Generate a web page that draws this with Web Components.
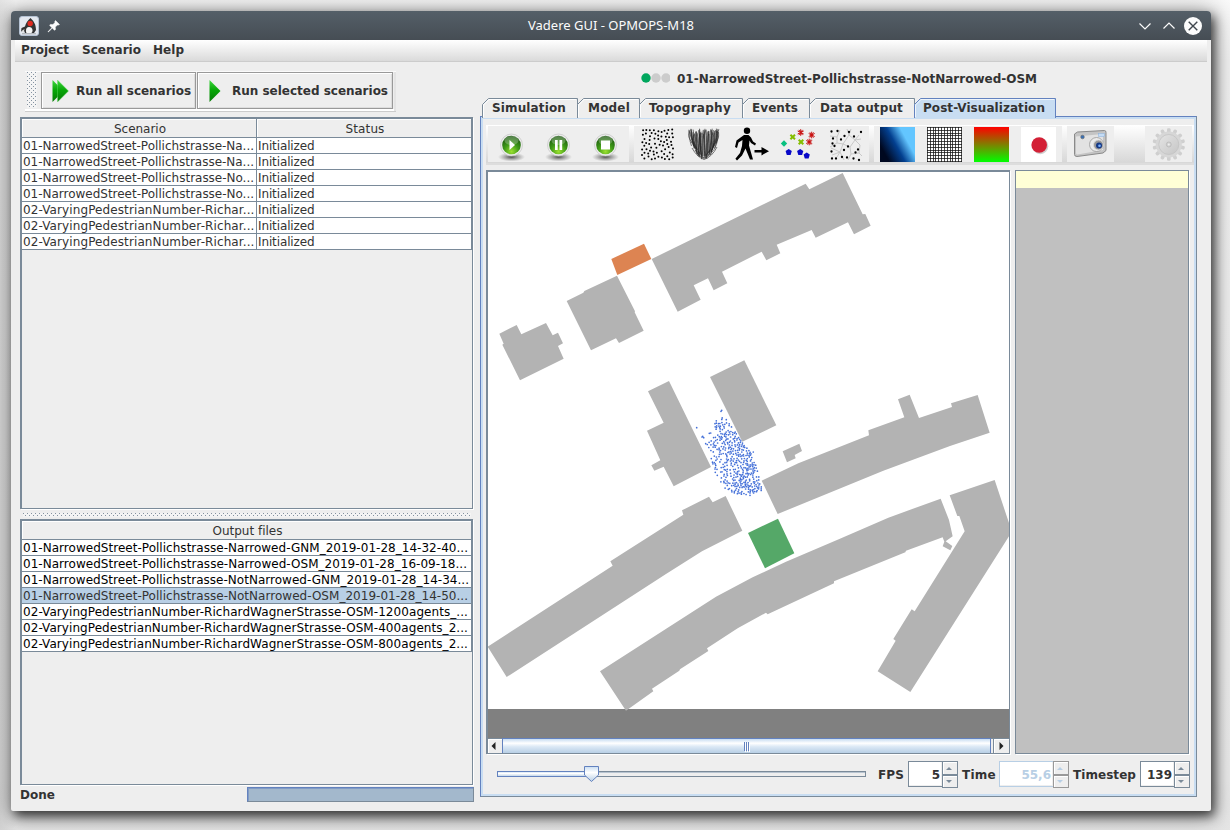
<!DOCTYPE html>
<html lang="en">
<head>
<meta charset="utf-8">
<title>Vadere GUI - OPMOPS-M18</title>
<style>
html,body{height:100%}
body{margin:0;padding:11px 19px 19px 11px;box-sizing:border-box;overflow:hidden;background:linear-gradient(90deg,rgba(0,0,0,.08),transparent 16px),linear-gradient(#fbfbfb,#f2f2f2 60px,#ececec 780px,#e6e6e6);font:12px "DejaVu Sans",sans-serif;color:#333}
[slot=title]{font:13px "Noto Sans",sans-serif}
</style>
</head>
<body>
<vd-window>
  <vd-fit slot="title" w="166">Vadere GUI - OPMOPS-M18</vd-fit>
  <vd-menubar slot="menu"></vd-menubar>
  <vd-scenarios></vd-scenarios>
  <vd-editor></vd-editor>
</vd-window>
<script>
const define = (name, css, html, init) => {
  const t = document.createElement('template');
  t.innerHTML = `<style>*{box-sizing:border-box}${css}</style>${html}`;
  customElements.define(name, class extends HTMLElement {
    connectedCallback() {
      if (this.shadowRoot) return;
      this.attachShadow({mode: 'open'}).append(t.content.cloneNode(true));
      if (init) init(this, this.shadowRoot);
    }
  });
};
const rng = seed => () => (seed = (seed * 1664525 + 1013904223) >>> 0) / 4294967296;

/* A run of text tracked to a given advance width */
define('vd-fit', `:host{display:inline-block;white-space:pre}`, `<span><slot></slot></span>`, (el, r) => {
  const s = r.querySelector('span');
  const w = +el.getAttribute('w');
  const n = el.textContent.length;
  if (w) {
    el.style.letterSpacing = ((w - s.getBoundingClientRect().width) / n) + 'px';
    el.style.width = w + 'px';
  }
});

/* Window frame */
define('vd-window', `
:host{display:grid;grid-template-rows:29px 21px 1fr;width:1200px;height:800px;background:#eee;border-radius:4px 4px 2px 2px;box-shadow:3px 5px 11px rgba(0,0,0,.7),0 2px 24px 4px rgba(0,0,0,.34)}
header{display:grid;grid-template-columns:60px 1fr 76px;align-items:center;background:linear-gradient(#545f68,#464d54);border-radius:4px 4px 0 0;color:#fcfcfc}
.l{display:flex;align-items:center;padding-left:8px;gap:8px}
.t{text-align:center;padding-left:16px;height:20px;line-height:18px}
main{display:grid;grid-template-columns:454px 717px;column-gap:6px;padding:0 0 0 9px}
svg{display:block}`, `
<header><div class="l">
<svg width="20" height="20" viewBox="0 0 20 20"><rect x=".5" y=".5" width="19" height="19" rx="2.500" fill="#e4e8ef" stroke="#b5c2d3"/><path d="M11.500 2C9 4 6.800 7 6 10.500L2.500 12l-.5 3.500 3-1 1 2.500h9l2-3c0-6-2.500-9-5.500-12z" fill="#333"/><path d="M10 11c2 0 3.500 1 3.500 3.500S12 17.500 9.500 17.500s-2.500-1-2.500-3S8 11 10 11z" fill="#f4f4f4"/><path d="M2.500 15l3-2-1 4z" fill="#ddd"/><path d="M3 17.800h14" stroke="#8a8f96" stroke-width=".8"/><circle cx="11.200" cy="7.500" r="2.700" fill="#e02a20"/></svg>
<svg width="14" height="14" viewBox="0 0 14 14"><path d="M8.500 1.500l4 4-1.200.6-.8-.2-2.200 2.200.2 2.400-1.100.8L5.300 9 2 12.500 1 13l.5-1L5 8.700 2.600 6.400l.8-1 2.500.2L8 3.500l-.2-1z" fill="#fcfcfc" stroke="#fcfcfc" stroke-width=".5"/></svg></div>
<div class="t"><slot name="title"></slot></div>
<svg width="70" height="28" viewBox="0 0 70 28" fill="none" stroke="#fcfcfc" stroke-width="1.200"><path d="M4.500 11.500l5.500 5.500 5.500-5.500M28.500 16.500l5.500-5.500 5.500 5.500"/><circle cx="58" cy="14" r="9" fill="#fcfcfc" stroke="none"/><path d="M53.700 9.700l8.600 8.600m0-8.600l-8.600 8.600" stroke="#40474e" stroke-width="1.400"/></svg>
</header><slot name="menu"></slot><main><slot></slot></main>`);

define('vd-menubar', `
:host{display:flex;margin:0 4px;padding:0 6px;background:linear-gradient(#fff,#dadada);border-bottom:1px solid #ccc;font-weight:bold;line-height:21px;height:21px;align-items:flex-start}
vd-fit{margin-right:13px}vd-fit:nth-of-type(2){margin-right:12px}`,
`<vd-fit w="48">Project</vd-fit><vd-fit w="59">Scenario</vd-fit><vd-fit w="31">Help</vd-fit>`);

define('vd-run-button', `
:host{display:flex;align-items:center;height:37px;border:1px solid #999;background:#eee;box-shadow:inset 1px 1px #fff,inset -1px -1px #ddd;padding-left:10px;font-weight:bold}
svg{display:block;margin-right:7px}`,
`<svg width="17" height="24" viewBox="0 0 17 24"><defs><linearGradient id="g" x1="0" y1="0" x2="0" y2="1"><stop offset="0" stop-color="#3fd83f"/><stop offset=".45" stop-color="#08a808"/><stop offset="1" stop-color="#067a06"/></linearGradient></defs><g></g></svg><slot></slot>`,
(el, r) => {
  r.querySelector('g').innerHTML = el.hasAttribute('all')
    ? '<path d="M.5 1l11 11-11 11z" fill="url(#g)"/><path d="M5.500 1l11 11-11 11z" fill="url(#g)" stroke="#6fe36f" stroke-width=".4"/>'
    : '<path d="M1.500 1l11 11-11 11z" fill="url(#g)"/>';
});

/* Left column: run toolbar, scenario list, output list, progress */
const DOTS = `conic-gradient(from 270deg at 1px 1px,#8593a1 25%,transparent 0) 0 0/4px 4px,conic-gradient(from 270deg at 1px 1px,#8593a1 25%,transparent 0) 2px 2px/4px 4px,#f4f4f4`;
define('vd-scenarios', `
:host{display:grid;grid-template-rows:46px 392px 10px 266px 19px;padding-top:10px;align-content:start}
.bar{display:flex;align-items:flex-start;margin:0 0 0 5px;width:371px;height:41px;padding:1px 0 0 2px;border-bottom:1px solid #ccc;box-shadow:inset 0 1px #fafafa,inset -2px 0 #e4e4e4,inset 0 -2px #fff}
.grip{width:10px;height:36px;margin-right:4px;background:${DOTS}}
.split{margin:4px 3px 0 3px;height:4px;background:${DOTS}}
.st{display:flex;justify-content:space-between;font-weight:bold;line-height:16px;padding-top:2px}
.p{width:227px;height:15px;background:#a3b8cc;border:1px solid #7a8a99;border-top-color:#6382bf;border-left-color:#6382bf;box-shadow:inset 1px 1px #6382bf88}
vd-run-button+vd-run-button{margin-left:1px}`, `
<div class="bar"><div class="grip"></div>
<vd-run-button all style="width:155px"><vd-fit w="115">Run all scenarios</vd-fit></vd-run-button>
<vd-run-button style="width:196px"><vd-fit w="156">Run selected scenarios</vd-fit></vd-run-button></div>
<vd-table id="a"></vd-table><div class="split"></div><vd-table id="b"></vd-table>
<div class="st"><vd-fit w="35">Done</vd-fit><div class="p"></div></div>`, (el, r) => {
  const N = '01-NarrowedStreet-Pollichstrasse-', V = '02-VaryingPedestrianNumber-Richar';
  const I = ['Initialized', 56.500];
  r.getElementById('a').data = {cols: '235px 215px', head: [['Scenario', 52], ['Status', 39]],
    rows: [[[N + 'Na...', 231], I], [[N + 'Na...', 231], I], [[N + 'No...', 231], I], [[N + 'No...', 231], I], [[V + '...', 231.500], I], [[V + '...', 231.500], I], [[V + '...', 231.500], I]]};
  r.getElementById('b').data = {cols: '450px', sel: 3, dark: true, head: [['Output files', 70]],
    rows: [[[N + 'Narrowed-GNM_2019-01-28_14-32-40...', 445]], [[N + 'Narrowed-OSM_2019-01-28_16-09-18...', 444]], [[N + 'NotNarrowed-GNM_2019-01-28_14-34...', 446]], [[N + 'NotNarrowed-OSM_2019-01-28_14-50...', 445]],
      [[V + 'dWagnerStrasse-OSM-1200agents_...', 445]], [[V + 'dWagnerStrasse-OSM-400agents_2...', 445]], [[V + 'dWagnerStrasse-OSM-800agents_2...', 445]]]};
});

define('vd-table', `
:host{display:block;width:453px;border:1px solid #7a8a99;border-left-width:2px;border-top-width:2px;box-shadow:1px 1px #fff;min-height:0}
.r{display:grid;height:16px;line-height:17px}
.r>*{border-right:1px solid #7a8a99;border-bottom:1px solid #7a8a99;background:#fff;padding-left:1px;overflow:hidden;white-space:pre}
.r>* vd-fit{height:15px}
.h{height:19px;line-height:20px}
.h>*{background:#eee;text-align:center;padding:0 0 0 2px;box-shadow:inset 1px 1px #fff}
.dark .r:not(.h):not(.s){color:#000}
.s>*{background:#b8cfe5}`, `<div class="box"></div>`, (el) => {
  const d = el.data;
  if (d) render(el, d);
});
function render(el, d) {
  const box = el.shadowRoot.querySelector('.box');
  if (d.dark) box.className = 'box dark';
  const row = (cells, cls) => `<div class="r ${cls}" style="grid-template-columns:${d.cols}">${cells.map(c => `<div><vd-fit w="${c[1]}">${c[0]}</vd-fit></div>`).join('')}</div>`;
  box.innerHTML = row(d.head, 'h') + d.rows.map((c, i) => row(c, i === d.sel ? 's' : '')).join('');
}
Object.defineProperty(customElements.get('vd-table').prototype, 'data', {
  set(v) { this._d = v; if (this.shadowRoot) render(this, v); },
  get() { return this._d; }
});
for (const s of document.querySelectorAll('vd-scenarios')) for (const t of s.shadowRoot.querySelectorAll('vd-table')) {
  if (Object.hasOwn(t, 'data')) { const v = t.data; delete t.data; t.data = v; }
}

/* Tabs */
define('vd-tab', `
:host{display:block;position:relative;height:19px;font-weight:bold;line-height:20px;margin-right:-1px}
svg{position:absolute;left:0;top:0;display:block}
vd-fit{position:relative}`, `<svg height="20"></svg><vd-fit></vd-fit>`, (el, r) => {
  const w = +el.getAttribute('width'), on = el.hasAttribute('on'), c = on ? '#6382bf' : '#7a8a99';
  el.style.width = w + 'px';
  const s = r.querySelector('svg');
  s.setAttribute('width', w);
  s.innerHTML = `<path d="M.5 20V6.500l6-6H${w - .5}V20" fill="${on ? '#c8ddf2' : '#eee'}" stroke="${c}"/><path d="M1.500 19V7l5.500-5.500h${w - 9}" fill="none" stroke="#fff" stroke-opacity="${on ? .7 : 1}"/>`;
  const old = r.querySelector('vd-fit'), f = document.createElement('vd-fit');
  f.setAttribute('w', el.getAttribute('tw'));
  f.textContent = el.getAttribute('label');
  f.style.marginLeft = el.getAttribute('pad') + 'px';
  old.replaceWith(f);
});

/* Toolbar icons, 35 by 35 */
const round = g => `<defs><radialGradient id="b" cx=".5" cy=".85" r=".8"><stop offset="0" stop-color="#9be030"/><stop offset=".5" stop-color="#3f9a18"/><stop offset="1" stop-color="#1d5a10"/></radialGradient><radialGradient id="sh"><stop offset="0" stop-color="#333" stop-opacity=".85"/><stop offset="1" stop-color="#666" stop-opacity="0"/></radialGradient></defs><ellipse cx="17.500" cy="30" rx="13.500" ry="4.500" fill="url(#sh)"/><circle cx="17.500" cy="18" r="11" fill="#ececec" stroke="#c4c4c4" stroke-width=".7"/><circle cx="17.500" cy="18" r="9.300" fill="url(#b)"/><ellipse cx="17.500" cy="13.500" rx="7" ry="4.500" fill="#fff" opacity=".25"/><g fill="#fff" transform="translate(0 1)">${g}</g>`;
const scatter = () => {
  const q = rng(23); const pts = []; let o = '', k = 0;
  while (pts.length < 66 && k++ < 20000) {
    const x = 2 + q() * 31, y = 2 + q() * 30.500;
    if (pts.every(p => Math.hypot(p[0] - x, p[1] - y) > 3.150)) { pts.push([x, y]); o += `<circle cx="${x.toFixed(1)}" cy="${y.toFixed(1)}" r="1"/>`; }
  }
  return o;
};
const brush = () => {
  const q = rng(9); let o = '';
  for (let i = 0; i < 56; i++) {
    const u = (i / 55) * 2 - 1, y0 = 1.500 + q() * 6, a = q();
    const x0 = 17 + u * 15 + q() * 2 - 1, y1 = 32.500 - u * u * 13 - a * 5, x1 = 17 + u * 11.500 + q() * 2 - 1;
    o += `<path d="M${x0.toFixed(1)} ${y0.toFixed(1)}C${(x0 + q() * 5 - 2.500).toFixed(1)} ${(y0 + 7).toFixed(1)} ${(17 + u * 14.500 + q() * 3 - 1.500).toFixed(1)} ${(y1 - 7).toFixed(1)} ${x1.toFixed(1)} ${y1.toFixed(1)}"/>`;
  }
  return `<g fill="none" stroke="#222" stroke-width=".6">${o}<path d="M5 21q5 9 12 11.500Q25 30 30 20M8 23q4 7 9 8.500 6-2 10-9M11 24l6 7 6-8"/></g>`;
};
const star = (x, y) => `<path d="M${x} ${y - 3.300}v6.600M${x - 3} ${y - 1.500}l6 3M${x - 3} ${y + 1.500}l6-3M${x - 1.800} ${y - 2.600}l3.600 5.200M${x + 1.800} ${y - 2.600}l-3.600 5.200" stroke="#c81010" stroke-width="1"/>`;
const cross = (x, y) => `<path d="M${x - 2.300} ${y - 2.300}l4.600 4.600m0-4.600l-4.600 4.600" stroke="#84bd00" stroke-width="2"/>`;
const pent = (x, y) => `<path d="M${x} ${y - 3.100}l3.100 2.200-1.200 3.900h-3.800l-1.200-3.900z" fill="#0808c8"/>`;
const gear = () => {
  let d = '';
  for (let i = 0; i < 14; i++) d += `<rect x="16" y="1.200" width="3.600" height="6" rx="1.300" transform="rotate(${i * 360 / 14} 17.800 17.500)"/>`;
  return `<defs><linearGradient id="q" x1="0" y1="0" x2="1" y2="1"><stop offset="0" stop-color="#e4e4e4"/><stop offset="1" stop-color="#c6c6c6"/></linearGradient></defs><g fill="#cfcfcf">${d}</g><circle cx="17.800" cy="17.500" r="13" fill="#d7d7d7"/><circle cx="17.800" cy="17.500" r="10" fill="url(#q)" stroke="#c0c0c0" stroke-width=".7"/><circle cx="17.800" cy="17.500" r="2.500" fill="#d0d0d0" stroke="#b0b0b0" stroke-width=".6"/><circle cx="17.800" cy="17.500" r="1" fill="#eee"/>`;
};
const V = [[3.500,4.500],[9.500,4],[21,5],[33,5],[5,11.500],[13,12.500],[16.500,9],[26,9.500],[4.500,16.500],[6.500,19],[20,19.500],[16,23],[30,22.500],[27.500,25.500],[3.500,24.500],[4,31.500],[8,31.500],[14,30],[19,30.500],[25.500,31.500],[31,33]];
const ICONS = {
  play: round('<path d="M15.500 12v10l5.500-5z"/>'),
  pause: round('<rect x="14" y="12" width="2.700" height="10"/><rect x="18.500" y="12" width="2.700" height="10"/>'),
  stop: round('<rect x="13" y="12.500" width="9" height="9"/>'),
  dots: scatter(), brush: brush(),
  walk: `<g transform="translate(-1.500 0)"><circle cx="14.500" cy="3.800" r="3.200"/><path d="M11.500 8h4.500l2.500 2.500 2 4 3 2-1 2-4-2.500-1.500-2.500-.5 5 4 14h-3l-4.500-11-3.500 7-5 5-1.600-1.800 4.600-5.700L9.500 19l.5-6-4 2.500-1.500 5.500L2.500 20 4 13.500z"/><path d="M22 23h7v-3l7.500 4.200-7.500 4.200v-3h-7z"/></g>`,
  groups: star(19.700, 5.500) + star(30.700, 8) + star(28.200, 15) + cross(11.700, 10) + cross(20, 15) + '<path d="M-.2 16.500l3.200-3.200 3.200 3.200-3.200 3.200z" fill="#08c080"/>' + pent(7.700, 25) + pent(19.200, 25) + pent(25.700, 28.500),
  voronoi: `<path d="M2 9l7 1 3-7M9 10l0 6-7 4M9 16l6 1 6-9-2-6M21 8l6 5 6-1M27 13l-5 7-7-3M15 17l-3 8-8 3M12 25l4 8M22 20l1 7 8-1 3 3M23 27l-3 6M27 13l5 5-1 8M12 25l-9-4M23 2l-2 6M9 30l3-5M31 8l-4 5" fill="none" stroke="#c4c4c4" stroke-width=".9"/>` + V.map(p => `<circle cx="${p[0]}" cy="${p[1]}" r="1.150"/>`).join(''),
  blue: `<defs><linearGradient id="l" x1="0" y1=".75" x2="1" y2=".2"><stop offset=".1" stop-color="#000820"/><stop offset=".45" stop-color="#034090"/><stop offset=".75" stop-color="#63c6ff"/></linearGradient></defs><rect width="35" height="35" fill="url(#l)"/>`,
  grid: `<rect width="35" height="35" fill="#fff"/><path d="${Array.from({length: 13}, (_, i) => { const p = Math.round(i * 2.830) + .5; return `M${p} 0v35M0 ${p}h35`; }).join('')}" stroke="#111" stroke-width=".75"/>`,
  heat: `<defs><linearGradient id="l" x1="0" y1="0" x2="0" y2="1"><stop offset="0" stop-color="#f00"/><stop offset="1" stop-color="#0f0"/></linearGradient></defs><rect width="35" height="35" fill="url(#l)"/>`,
  rec: `<rect width="35" height="35" fill="#fff"/><circle cx="19.300" cy="19.200" r="8" fill="#bbb" opacity=".7"/><circle cx="18.200" cy="18" r="7.800" fill="#d32036"/>`,
  camera: `<g transform="translate(0 -1)"><path d="M1.500 8l3-2 27-1.500q1.500 0 1.500 2v18l-3 2.500-26 3.500q-2.500 0-2.500-2z" fill="#c4c4c4" stroke="#8a8a8a"/><path d="M3 10.500L30 8v16L4.500 28.500Q3 28.500 3 27z" fill="#e2e2e2"/><rect x="25.500" y="7.500" width="6" height="3" fill="#c4dcf5" stroke="#8ab0dc" stroke-width=".5"/><circle cx="9.500" cy="11" r="1.800" fill="#3970b5" stroke="#666" stroke-width=".6"/><circle cx="23.500" cy="18.500" r="7" fill="#ececec" stroke="#999" stroke-width=".8"/><circle cx="25.500" cy="19" r="5" fill="#999" stroke="#ddd" stroke-width=".8"/><circle cx="26" cy="19.600" r="3" fill="#173a86"/><circle cx="26.500" cy="19.800" r="1.300" fill="#7db4ff"/></g>`,
  gear: gear()
};
define('vd-icon', `:host{display:flex;justify-content:center;width:47px;height:36px;background:#eee;padding-top:1px}svg{display:block}`,
  `<svg width="35" height="35" viewBox="0 0 35 35" style="overflow:visible"></svg>`, (el, r) => { r.querySelector('svg').innerHTML = ICONS[el.getAttribute('name')]; });

define('vd-tools', `
:host{display:flex;height:40px;padding:1px 2px 0;background:linear-gradient(#fff,#d8d8d8 92%);box-shadow:inset 0 -2px #ddd}
.s{width:5px}.g{width:31px}`,
`<vd-icon name="play"></vd-icon><vd-icon name="pause"></vd-icon><vd-icon name="stop"></vd-icon><div class="s"></div>
<vd-icon name="dots"></vd-icon><vd-icon name="brush"></vd-icon><vd-icon name="walk"></vd-icon><vd-icon name="groups"></vd-icon><vd-icon name="voronoi"></vd-icon><div class="s"></div>
<vd-icon name="blue"></vd-icon><vd-icon name="grid"></vd-icon><vd-icon name="heat"></vd-icon><vd-icon name="rec"></vd-icon><div class="s"></div>
<vd-icon name="camera"></vd-icon><div class="g"></div><vd-icon name="gear"></vd-icon>`);

/* Street map with buildings, source, target and pedestrians */
define('vd-map', `:host{display:block;height:566px;background:linear-gradient(#fff 537px,#808080 537px)}svg{display:block}`, `
<svg width="521" height="566" viewBox="488 172 521 566"><g fill="#b3b3b3">
<g transform="translate(490 170) scale(.33333)">
<path d="M28 491L80 465 94 493 168 459 188 496 204 488 219 520 204 528 221 566 90 631 37 524 41 521z"/>
<path d="M230 393L280 368 283 363 381 317 435 424 434 427 461 482 387 519 378 505 303 541z"/>
<path d="M364 267L462 221 484 267 382 315z" fill="#dd8452"/>
<path d="M485 267L947 41 958 58 1058 9 1118 133 1126 132 1142 167 1092 193 1074 157 977 203 965 180 860 224 871 250 829 271 815 245 696 305 712 340 671 361 654 325 611 346 632 389 563 425z"/></g>
<g transform="translate(630 350) scale(.33333)">
<path d="M54 124L117 93 243 351 131 409 101 350 73 362 64 346 91 331 51 242 101 218z"/>
<path d="M240 81L343 31 439 226 337 275z"/>
<path d="M458 304L508 281 516 303 494 315 497 325 471 337z"/>
<path d="M395 392L505 340 717 256 715 241 823 202 804 148 839 134 867 204 966 171 963 160 1043 135 1079 248 960 288 760 362 443 492z"/>
<path d="M354 549L444 506 493 610 405 655z" fill="#55a868"/></g>
<g transform="translate(486 470) scale(.33333)">
<path d="M5 530L380 287 373 274 592 134 588 121 669 80 680 97 719 78 769 182 648 244 540 312 62 621z"/>
<path d="M342 604L690 380 800 322 900 275 1060 207 1207 143 1364 86 1389 150 1400 199 1379 214 1399 228 1393 241 1370 229 1375 215 1370 202 1260 242 1258 247 1044 334 1044 340 845 433 840 428 755 475 663 535 667 543 582 598 580 602 498 656 502 664 420 722z"/></g>
<g transform="translate(760 470) scale(.33333)"><path d="M569 76L704 30 748 162 748 197 451 666 353 604 407 512 400 507 455 418 464 424 614 184 598 138 592 138z"/></g>
</g><g id="p" fill="#4470d8"></g></svg>`, (el, r) => {
  const poly = [[70,55],[100,38],[120,60],[155,112],[182,140],[200,190],[217,262],[205,264],[180,274],[150,272],[115,264],[92,240],[75,195],[57,150],[45,115],[85,92]];
  const inside = (x, y) => poly.reduce((c, [x1, y1], i) => { const [x2, y2] = poly[(i + 1) % poly.length]; return (y1 > y) !== (y2 > y) && x < (x2 - x1) * (y - y1) / (y2 - y1) + x1 ? !c : c; }, false);
  const q = rng(77), pts = [[95,19],[93,22],[20,71],[38,97],[41,101],[47,119],[36,99],[58,88],[62,87],[109,47],[76,205],[82,214],[190,144]];
  for (let k = 0; k < 1600 && pts.length < 455; k++) {
    const x = 40 + q() * 180, y = 35 + q() * 240;
    if (!inside(x, y)) continue;
    const edge = x - (47 + (y - 100) * .36);
    if (q() > Math.min(1, .35 + Math.max(0, edge) / 80) * (y < 90 ? .7 : 1)) continue;
    if (pts.every(p => Math.hypot(p[0] - x, p[1] - y) > 3.900)) pts.push([x, y]);
  }
  r.getElementById('p').innerHTML = pts.map(p => `<circle cx="${(690 + p[0] / 3).toFixed(1)}" cy="${(404 + p[1] / 3).toFixed(1)}" r=".85"/>`).join('');
});

define('vd-scrollbar', `
:host{display:grid;grid-template-columns:14px 489px 1fr;height:15px;background:#eee;border-top:1px solid #7a8a99}
.b{display:grid;place-items:center;background:#eee;box-shadow:inset 1px 1px #fff;padding-right:3px}
.r{border-left:1px solid #7a8a99;margin-left:2px;padding-right:1px}
.t{display:flex;justify-content:center;gap:1px;align-items:center;background:linear-gradient(#c8ddf2,#fff 30%,#dbe8f5 55%,#b8cfe5);border:1px solid #6382bf;border-width:0 1px;box-shadow:0 -1px #6382bf}
i{width:1px;height:9px;background:#6382bf;box-shadow:1px 1px #fff}svg{display:block}`,
`<div class="b"><svg width="5" height="8"><path d="M4.500 0v8L.5 4z" fill="#222"/></svg></div><div class="t"><i></i><i></i><i></i></div><div class="b r"><svg width="5" height="8"><path d="M.5 0v8l4-4z" fill="#222"/></svg></div>`);

define('vd-slider', `:host{display:block}svg{display:block}`,
`<svg width="370" height="27"><defs><linearGradient id="t" x1="0" y1="0" x2="0" y2="1"><stop offset="0" stop-color="#c8ddf2"/><stop offset=".4" stop-color="#fff"/><stop offset="1" stop-color="#b8cfe5"/></linearGradient></defs>
<rect x=".5" y="10.500" width="368" height="5" fill="#eee" stroke="#7a8a99"/><path d="M1 11.500h367" stroke="#b8c4d0"/><rect x=".5" y="10.500" width="92" height="5" fill="url(#t)" stroke="#6382bf"/>
<path d="M87.500 5.500h14v8.500l-7 6.500-7-6.500z" fill="url(#t)" stroke="#6382bf"/></svg>`);

define('vd-spinner', `
:host{display:grid;grid-template-columns:1fr 16px;height:27px;font-weight:bold}
.v{background:#fff;border:1px solid #7a8a99;border-right:0;text-align:right;padding-right:2px;line-height:26px;height:26px;box-shadow:inset -1px -1px #eee}
.u{display:grid;grid-template-rows:14px 13px}
.u div{display:grid;place-items:center;border:1px solid #7a8a99;background:#eee;box-shadow:inset 1px 1px #fff}
.u div svg{margin-right:3px}
:host([off]) .v{color:#b8cfe5;border-color:#b8cfe5}:host([off]) .u div{border-color:#999}
svg{display:block;fill:#7a8a99}:host([off]) svg{fill:#b8cfe5}`,
`<div class="v"><slot></slot></div><div class="u"><div><svg width="6" height="3"><path d="M3 0l3 3H0z"/></svg></div><div><svg width="6" height="3"><path d="M3 3l3-3H0z"/></svg></div></div>`);

define('vd-editor', `
:host{display:grid;grid-template-rows:37px 18px 681px;min-width:0;align-content:start;font-weight:bold}
.name{display:flex;align-items:center;padding-left:161px;height:35px}
.name svg{display:block;margin:-1px 7px 0 0}
.name vd-fit{margin-top:1px}
.tabs{display:flex;padding-left:2px;position:relative}
.panel{border:1px solid #6382bf;border-right-color:#7a8a99;border-bottom-color:#7a8a99;box-shadow:inset 2px 2px #c8ddf2,inset -2px -2px #c8ddf2;padding:8px 2px 0 5px}
.view{display:grid;grid-template-columns:524px 174px;column-gap:5px;margin-top:5px;height:584px}
.map{border:2px solid #7a8a99;border-right-width:1px;border-bottom-width:1px;box-shadow:1px 1px #fff}
.side{border:1px solid #7a8a99;background:linear-gradient(#ffffd6 17px,#c0c0c0 17px);box-shadow:1px 1px #fff}
.ctl{display:grid;grid-template-columns:381px 30px 54px 37px 74px 67px 50px;margin:7px 0 0 11px;align-items:center}
.ctl vd-spinner{margin-right:4px}.ctl vd-spinner:last-child{margin-right:0}`, `
<div class="name"><svg width="29" height="12"><circle cx="5" cy="6" r="4.700" fill="#00a65d"/><circle cx="15" cy="6" r="4.700" fill="#ccc"/><circle cx="25" cy="6" r="4.700" fill="#ccc"/></svg><vd-fit w="360">01-NarrowedStreet-Pollichstrasse-NotNarrowed-OSM</vd-fit></div>
<div class="tabs"><vd-tab width="96" pad="10" tw="74" label="Simulation"></vd-tab><vd-tab width="63" pad="11" tw="42" label="Model"></vd-tab><vd-tab width="104" pad="10" tw="82" label="Topography"></vd-tab><vd-tab width="68" pad="10" tw="46" label="Events"></vd-tab><vd-tab width="106" pad="11" tw="83" label="Data output"></vd-tab><vd-tab on width="142" pad="9" tw="122" label="Post-Visualization"></vd-tab></div>
<div class="panel"><vd-tools></vd-tools>
<div class="view"><div class="map"><vd-map></vd-map><vd-scrollbar></vd-scrollbar></div><div class="side"></div></div>
<div class="ctl"><vd-slider></vd-slider><vd-fit w="26">FPS</vd-fit><vd-spinner>5</vd-spinner><vd-fit w="34">Time</vd-fit><vd-spinner off>55,6</vd-spinner><vd-fit w="63">Timestep</vd-fit><vd-spinner>139</vd-spinner></div></div>`);
</script>
</body>
</html>
